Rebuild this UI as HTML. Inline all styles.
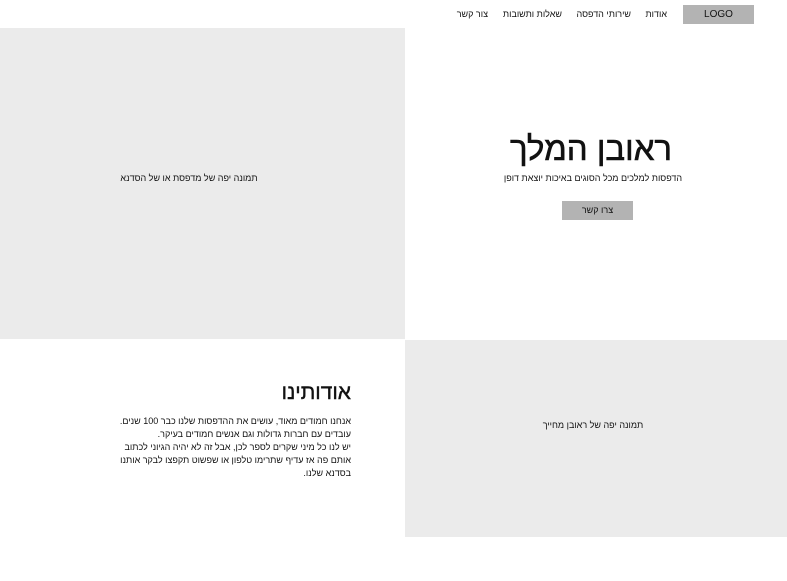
<!DOCTYPE html>
<html><head><meta charset="utf-8"><style>
*{margin:0;padding:0;box-sizing:border-box}
body{width:787px;height:581px;background:#fff;position:relative;overflow:hidden;font-family:"Liberation Sans","Noto Sans CJK SC",sans-serif;color:#111}
.a{position:absolute}
.nav{font-size:9px;top:9px;direction:rtl;white-space:nowrap}
.g{background:#ebebeb}
</style></head><body>
<div class="a" style="left:683px;top:5px;width:71px;height:19px;background:#b3b3b3;font-size:10px;text-align:center;line-height:19px">LOGO</div>
<div class="a nav" style="right:120px">אודות</div>
<div class="a nav" style="right:156px">שירותי הדפסה</div>
<div class="a nav" style="right:225px">שאלות ותשובות</div>
<div class="a nav" style="right:299px">צור קשר</div>
<div class="a g" style="left:0;top:28px;width:405px;height:311px"></div>
<div class="a" style="left:0;top:173px;width:378px;text-align:center;font-size:9px;direction:rtl">תמונה יפה של מדפסת או של הסדנא</div>
<div class="a" style="left:400px;top:130px;width:382px;text-align:center;font-size:33px;direction:rtl;-webkit-text-stroke:0.6px #111">ראובן המלך</div>
<div class="a" style="left:402px;top:173px;width:382px;text-align:center;font-size:9px;direction:rtl">הדפסות למלכים מכל הסוגים באיכות יוצאת דופן</div>
<div class="a" style="left:562px;top:201px;width:71px;height:19px;background:#b3b3b3;font-size:9px;text-align:center;line-height:19px;direction:rtl">צרו קשר</div>
<div class="a g" style="left:405px;top:340px;width:382px;height:197px"></div>
<div class="a" style="left:402px;top:420px;width:382px;text-align:center;font-size:9px;direction:rtl">תמונה יפה של ראובן מחייך</div>
<div class="a" style="left:100px;top:381px;width:251px;text-align:right;font-size:21px;direction:rtl;-webkit-text-stroke:0.4px #111">אודותינו</div>
<div class="a" style="left:118px;top:415px;width:233px;text-align:right;font-size:9px;line-height:13px;direction:rtl">אנחנו חמודים מאוד, עושים את ההדפסות שלנו כבר 100 שנים.<br>עובדים עם חברות גדולות וגם אנשים חמודים בעיקר.<br>יש לנו כל מיני שקרים לספר לכן, אבל זה לא יהיה הגיוני לכתוב אותם פה אז עדיף שתרימו טלפון או שפשוט תקפצו לבקר אותנו בסדנא שלנו.</div>
</body></html>
